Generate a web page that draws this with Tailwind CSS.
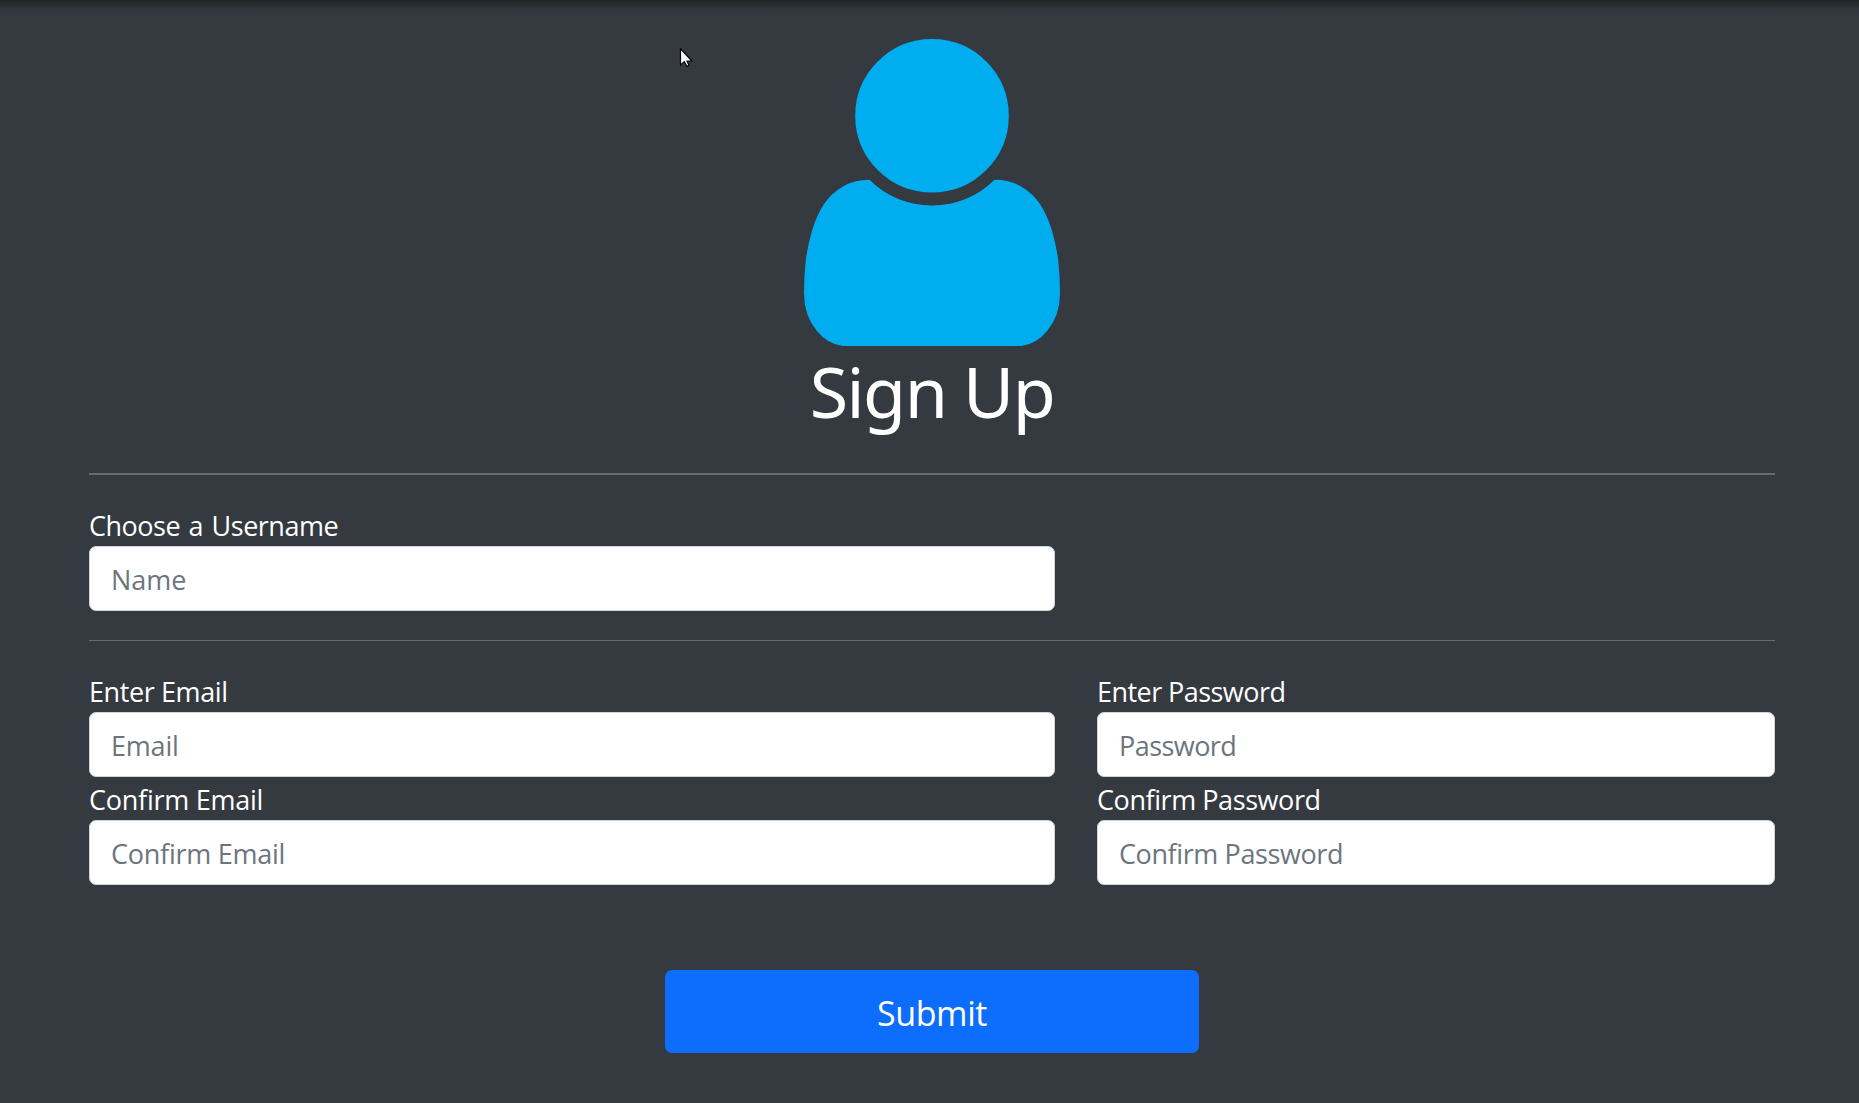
<!DOCTYPE html>
<html lang="en">
<head>
<meta charset="utf-8">
<title>Sign Up</title>
<script src="https://cdn.jsdelivr.net/npm/@tailwindcss/browser@4"></script>
</head>
<body class="relative h-screen overflow-hidden bg-[#343a40] font-['Open_Sans',sans-serif] text-[27px] text-white">
<div class="absolute inset-x-0 top-0 h-4 bg-linear-to-b from-[#202427] via-[#2f3438] to-[#343a40]"></div>
<svg class="absolute left-[679px] top-12 h-5 w-3.5" viewBox="0 0 14 20"><path d="M1.5 .8V17l3.8-3.4L7.8 18.4l2.2-1-2-4.4h4.9Z" fill="#fff" stroke="#05060a" stroke-width="1.2"/></svg>
<main class="mr-[84px] ml-[89px] flex flex-col pt-[39px]">
  <header class="flex h-[394px] flex-col items-center">
    <svg class="h-[307.2px] w-64 shrink-0" viewBox="0 0 1280 1536" fill="#00adef"><g transform="matrix(1 0 0 -1 0 1408)"><path d="M1280 137q0 -109 -62.5 -187t-150.5 -78h-854q-88 0 -150.5 78t-62.5 187q0 85 8.5 160.5t31.5 152t58.5 131t94 89t134.5 34.5q131 -128 313 -128t313 128q76 0 134.5 -34.5t94 -89t58.5 -131t31.5 -152t8.5 -160.5z"/><path d="M1024 1024q0 -159 -112.5 -271.5t-271.5 -112.5t-271.5 112.5t-112.5 271.5t112.5 271.5t271.5 112.5t271.5 -112.5t112.5 -271.5z"/></g></svg>
    <h1 class="mt-[2.8px] font-['Noto_Sans',sans-serif] text-[70px] leading-[84px] tracking-[-1.5px]">Sign Up</h1>
  </header>
  <hr class="mt-10 h-0.5 border-0 bg-[#676b6f]">
  <form>
    <div class="mt-[29px] w-[966px]">
      <label for="name" class="block h-[42px] pt-px leading-[42px] tracking-[-0.5px] [word-spacing:2px]">Choose a Username</label>
      <input id="name" placeholder="Name" class="block h-[65px] w-full rounded-[7px] border border-[#ced4da] bg-white px-[21px] pt-0.5 placeholder:text-[#6c757d]">
    </div>
    <hr class="mt-[29px] h-px border-0 bg-[#676b6f]">
    <div class="mt-[29px] grid grid-cols-[966px_678px] gap-x-[42px] gap-y-px">
      <div>
        <label for="email" class="block h-[42px] pt-px leading-[42px] tracking-[-0.4px]">Enter Email</label>
        <input id="email" placeholder="Email" class="block h-[65px] w-full rounded-[7px] border border-[#ced4da] bg-white px-[21px] pt-0.5 tracking-[-0.2px] placeholder:text-[#6c757d]">
      </div>
      <div>
        <label for="password" class="block h-[42px] pt-px leading-[42px] tracking-[-0.55px]">Enter Password</label>
        <input id="password" placeholder="Password" class="block h-[65px] w-full rounded-[7px] border border-[#ced4da] bg-white px-[21px] pt-0.5 tracking-[-0.55px] placeholder:text-[#6c757d]">
      </div>
      <div>
        <label for="email2" class="block h-[42px] pt-px leading-[42px] tracking-[-0.25px]">Confirm Email</label>
        <input id="email2" placeholder="Confirm Email" class="block h-[65px] w-full rounded-[7px] border border-[#ced4da] bg-white px-[21px] pt-0.5 tracking-[-0.25px] placeholder:text-[#6c757d]">
      </div>
      <div>
        <label for="password2" class="block h-[42px] pt-px leading-[42px] tracking-[-0.43px]">Confirm Password</label>
        <input id="password2" placeholder="Confirm Password" class="block h-[65px] w-full rounded-[7px] border border-[#ced4da] bg-white px-[21px] pt-0.5 tracking-[-0.4px] placeholder:text-[#6c757d]">
      </div>
    </div>
    <button type="button" class="mx-auto mt-[85px] block h-[83px] w-[534px] rounded-[7px] bg-[#0d6efd] pt-[3px] text-[34px] tracking-[-0.4px]">Submit</button>
  </form>
</main>
</body>
</html>
